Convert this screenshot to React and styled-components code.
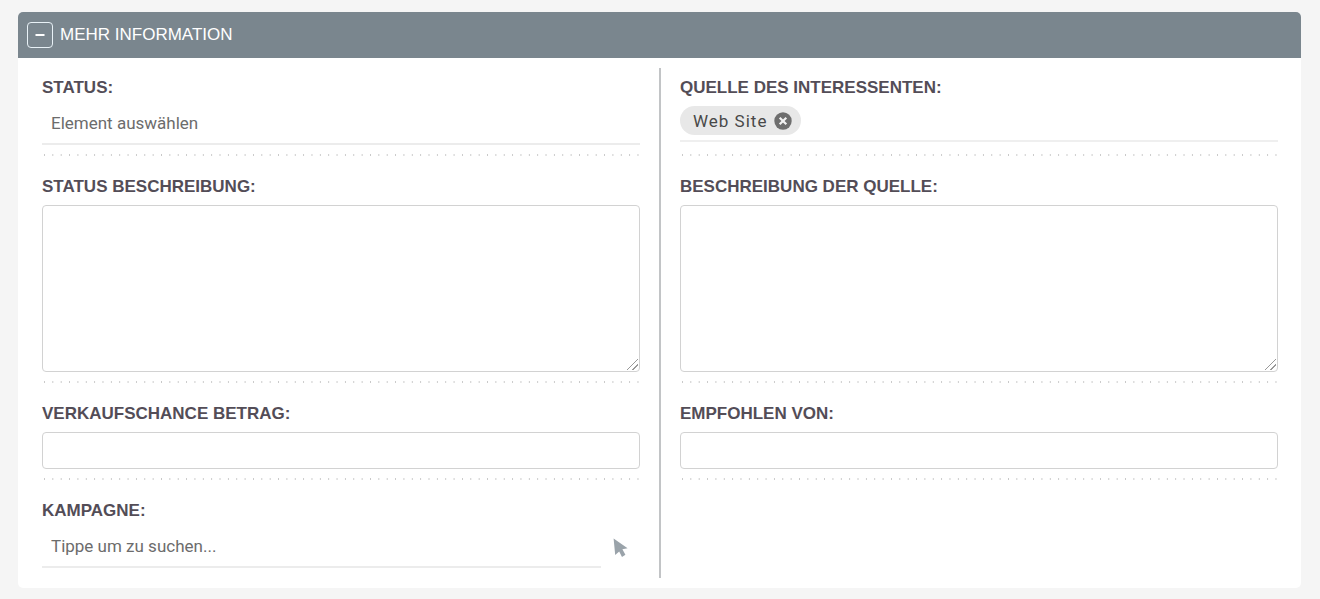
import React, { useState } from 'react'
import styled, { createGlobalStyle } from 'styled-components'

const GlobalStyle = createGlobalStyle`
  * {
    box-sizing: border-box;
  }

  body {
    margin: 0;
    background: #f5f5f5;
    font-family: Roboto, "Liberation Sans", sans-serif;
  }
`;

const Page = styled.main`
  padding: 12px 19px 11px 18px;
`;

const Panel = styled.section`
  background: #fff;
  border-radius: 5px;
  overflow: hidden;
`;

const PanelHeader = styled.header`
  display: flex;
  align-items: center;
  gap: 7px;
  height: 46px;
  padding: 0 9px;
  background: #7a868e;

  h2 {
    margin: 0;
    font: 400 17px/22px "Liberation Sans", Arial, sans-serif;
    color: #fff;
    text-transform: uppercase;
  }
`;

const ToggleButton = styled.button`
  display: flex;
  align-items: center;
  justify-content: center;
  width: 26px;
  height: 26px;
  padding: 0;
  border: 1px solid #e8f1f6;
  border-radius: 4px;
  background: transparent;
  color: #fff;
  cursor: pointer;
`;

const PanelBody = styled.div`
  display: grid;
  grid-template-columns: 1fr 2px 1fr;
  column-gap: 19px;
  padding: 10px 23px 10px 24px;
`;

const Divider = styled.div`
  background: #c2c4c6;
`;

const Column = styled.div`
  display: flex;
  flex-direction: column;
  gap: 20px;
  min-width: 0;
  padding-top: 9px;
`;

const Field = styled.div`
  display: flex;
  flex-direction: column;
  padding-bottom: ${({ $last }) => ($last ? '10px' : '11px')};
  background: ${({ $last }) =>
    $last
      ? 'none'
      : 'linear-gradient(90deg, #c8c8c8 1px, transparent 1px) 2px 100% / 1.4% 2px repeat-x'};
`;

const Label = styled.label`
  margin-bottom: ${({ $tight }) => ($tight ? '6px' : '7px')};
  font: 700 17px/22px "Liberation Sans", Arial, sans-serif;
  color: #534d57;
  text-transform: uppercase;
`;

const boxed = `
  width: 100%;
  border: 1px solid #d2d2d2;
  border-radius: 4px;
  background: #fff;
  font: 400 16px/20px Roboto, sans-serif;
  color: #555;
  outline: none;
`;

const TextBox = styled.input`
  ${boxed}
  height: 37px;
  padding: 0 10px;
`;

const TextArea = styled.textarea`
  ${boxed}
  display: block;
  height: 167px;
  padding: 8px 10px;
  resize: vertical;

  &::-webkit-resizer {
    background: linear-gradient(
      135deg,
      transparent 51%,
      #999 51%,
      #999 58%,
      transparent 58%,
      transparent 73%,
      #999 73%,
      #999 80%,
      transparent 80%
    ) 2px 2px / 12px 12px no-repeat;
  }
`;

const LineInput = styled.input`
  width: 100%;
  min-width: 0;
  height: 40px;
  padding: 0 9px 2px;
  border: 0;
  border-bottom: 2px solid #ececec;
  background: transparent;
  font: 400 17px/20px Roboto, sans-serif;
  color: #555;
  outline: none;

  &::placeholder {
    color: #6c6c6c;
    opacity: 1;
  }
`;

const ChipLine = styled.div`
  display: flex;
  align-items: flex-start;
  height: 36px;
  margin-bottom: 3px;
  border-bottom: 2px solid #efefef;
`;

const Chip = styled.span`
  display: flex;
  align-items: center;
  gap: 7px;
  height: 29px;
  padding: 0 9px 0 13px;
  border-radius: 15px;
  background: #e8e8e8;
  font-size: 17px;
  line-height: 20px;
  letter-spacing: 1px;
  color: #484848;
`;

const ChipRemove = styled.button`
  display: flex;
  padding: 0;
  border: 0;
  background: none;
  cursor: pointer;
`;

const LookupRow = styled.div`
  display: flex;
  align-items: center;
`;

const PickButton = styled.button`
  display: flex;
  flex-shrink: 0;
  align-items: center;
  justify-content: center;
  width: 39px;
  height: 36px;
  padding: 0;
  border: 0;
  background: none;
  cursor: pointer;
`;

const CursorIcon = () => (
  <svg width="16" height="20" viewBox="0 0 16 20" aria-hidden="true">
    <path d="M0.6 0.5 L14.6 10.3 L9.4 11.3 L12.4 16.8 L9 19 L6.2 13.4 L2.2 17 Z" fill="#9aa3aa" />
  </svg>
)

const RemoveIcon = () => (
  <svg width="18" height="18" viewBox="0 0 18 18" aria-hidden="true">
    <circle cx="9" cy="9" r="8.7" fill="#6e6e6e" />
    <path d="M5.7 5.7 L12.3 12.3 M12.3 5.7 L5.7 12.3" stroke="#f2f2f2" strokeWidth="2.2" />
  </svg>
)

const App = () => {
  const [open, setOpen] = useState(true)
  const [source, setSource] = useState('Web Site')

  return (
    <>
      <GlobalStyle />
      <Page>
        <Panel>
          <PanelHeader>
            <ToggleButton type="button" aria-label="Bereich umschalten" aria-expanded={open} onClick={() => setOpen(!open)}>
              <svg width="10" height="10" viewBox="0 0 10 10" aria-hidden="true">
                <path d={open ? 'M0.5 5 H9.5' : 'M0.5 5 H9.5 M5 0.5 V9.5'} stroke="currentColor" strokeWidth="2" />
              </svg>
            </ToggleButton>
            <h2>Mehr Information</h2>
          </PanelHeader>
          {open && (
            <PanelBody>
              <Column>
                <Field>
                  <Label htmlFor="status" $tight>Status:</Label>
                  <LineInput id="status" placeholder="Element auswählen" />
                </Field>
                <Field>
                  <Label htmlFor="status-description">Status Beschreibung:</Label>
                  <TextArea id="status-description" />
                </Field>
                <Field>
                  <Label htmlFor="amount">Verkaufschance Betrag:</Label>
                  <TextBox id="amount" type="text" />
                </Field>
                <Field $last>
                  <Label htmlFor="campaign" $tight>Kampagne:</Label>
                  <LookupRow>
                    <LineInput id="campaign" placeholder="Tippe um zu suchen..." />
                    <PickButton type="button" aria-label="Kampagne auswählen">
                      <CursorIcon />
                    </PickButton>
                  </LookupRow>
                </Field>
              </Column>
              <Divider />
              <Column>
                <Field>
                  <Label as="span">Quelle des Interessenten:</Label>
                  <ChipLine>
                    {source && (
                      <Chip>
                        {source}
                        <ChipRemove type="button" aria-label={`${source} entfernen`} onClick={() => setSource('')}>
                          <RemoveIcon />
                        </ChipRemove>
                      </Chip>
                    )}
                  </ChipLine>
                </Field>
                <Field>
                  <Label htmlFor="source-description">Beschreibung der Quelle:</Label>
                  <TextArea id="source-description" />
                </Field>
                <Field>
                  <Label htmlFor="referred-by">Empfohlen von:</Label>
                  <TextBox id="referred-by" type="text" />
                </Field>
              </Column>
            </PanelBody>
          )}
        </Panel>
      </Page>
    </>
  )
}

export default App
